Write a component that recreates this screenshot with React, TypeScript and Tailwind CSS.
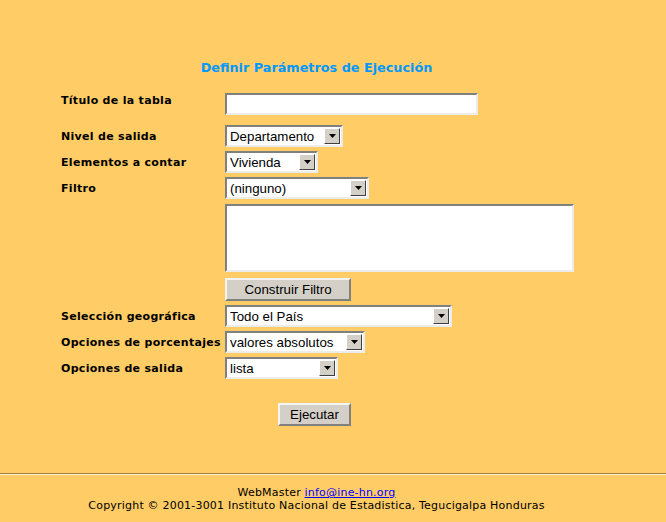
import React from 'react';

const labelCls =
  "w-[164px] shrink-0 pt-[2px] text-[11px] tracking-[0.3px] font-bold text-black [font-family:'DejaVu_Sans',Verdana,sans-serif]";

const FakeSelect: React.FC<{ value: string; width: string }> = ({ value, width }) => (
  <div
    className={`${width} h-[22px] flex items-stretch bg-white border-2 border-t-[#808080] border-l-[#808080] border-b-[#ececec] border-r-[#ececec]`}
  >
    <div className="flex-1 pl-[3px] flex items-center text-[13.3px] text-black leading-none [font-family:'Liberation_Sans',Arial,sans-serif] overflow-hidden whitespace-nowrap">
      {value}
    </div>
    <div className="w-[16px] m-[1px] flex items-center justify-center bg-[#d4d0c8] border border-t-white border-l-white border-b-[#404040] border-r-[#404040]">
      <svg width="7" height="4" viewBox="0 0 7 4">
        <path d="M0 0h7L3.5 4z" fill="#000" />
      </svg>
    </div>
  </div>
);

const Button: React.FC<{ label: string; width: string }> = ({ label, width }) => (
  <button
    className={`${width} h-[23px] bg-[#d4d0c8] text-[13.3px] text-black leading-none [font-family:'Liberation_Sans',Arial,sans-serif] border-2 border-t-[#f4f4f4] border-l-[#f4f4f4] border-b-[#808080] border-r-[#808080]`}
  >
    {label}
  </button>
);

export default function App() {
  return (
    <div className="w-full min-h-[522px] bg-[#ffcc66] flex flex-col">
      <h1 className="w-[633px] pt-[58px] text-center text-[12.8px] font-bold text-[#0099ff] [font-family:'DejaVu_Sans',Verdana,sans-serif]">
        Definir Parámetros de Ejecución
      </h1>

      <div className="ml-[61px] mt-[16px] flex flex-col">
        <div className="flex items-start h-[22px]">
          <div className={`${labelCls} !pt-0`}>Título de la tabla</div>
          <div className="w-[253px] h-[22px] bg-white border-2 border-t-[#808080] border-l-[#808080] border-b-[#ececec] border-r-[#ececec]" />
        </div>

        <div className="flex items-center mt-[10px]">
          <div className={labelCls}>Nivel de salida</div>
          <FakeSelect value="Departamento" width="w-[118px]" />
        </div>

        <div className="flex items-center mt-[4px]">
          <div className={labelCls}>Elementos a contar</div>
          <FakeSelect value="Vivienda" width="w-[93px]" />
        </div>

        <div className="flex items-center mt-[4px]">
          <div className={labelCls}>Filtro</div>
          <FakeSelect value="(ninguno)" width="w-[144px]" />
        </div>

        <div className="flex mt-[5px]">
          <div className="w-[164px] shrink-0" />
          <div className="w-[349px] h-[68px] bg-white border-2 border-t-[#808080] border-l-[#808080] border-b-[#ececec] border-r-[#ececec]" />
        </div>

        <div className="flex mt-[6px]">
          <div className="w-[164px] shrink-0" />
          <Button label="Construir Filtro" width="w-[126px]" />
        </div>

        <div className="flex items-center mt-[4px]">
          <div className={labelCls}>Selección geográfica</div>
          <FakeSelect value="Todo el País" width="w-[227px]" />
        </div>

        <div className="flex items-center mt-[4px]">
          <div className={labelCls}>Opciones de porcentajes</div>
          <FakeSelect value="valores absolutos" width="w-[140px]" />
        </div>

        <div className="flex items-center mt-[4px]">
          <div className={labelCls}>Opciones de salida</div>
          <FakeSelect value="lista" width="w-[113px]" />
        </div>

        <div className="flex mt-[24px]">
          <div className="w-[217px] shrink-0" />
          <Button label="Ejecutar" width="w-[73px]" />
        </div>
      </div>

      <div className="mt-[47px] border-t border-t-[#a08040] border-b border-b-[#ffeecc]" />

      <div className="w-[633px] mt-[11px] text-center text-[11px] tracking-[0.2px] leading-[13px] text-black [font-family:'DejaVu_Sans',Verdana,sans-serif]">
        <div>
          WebMaster{' '}
          <a href="#" className="text-[#0000ff] underline">
            info@ine-hn.org
          </a>
        </div>
        <div>Copyright © 2001-3001 Instituto Nacional de Estadistica, Tegucigalpa Honduras</div>
      </div>
    </div>
  );
}
